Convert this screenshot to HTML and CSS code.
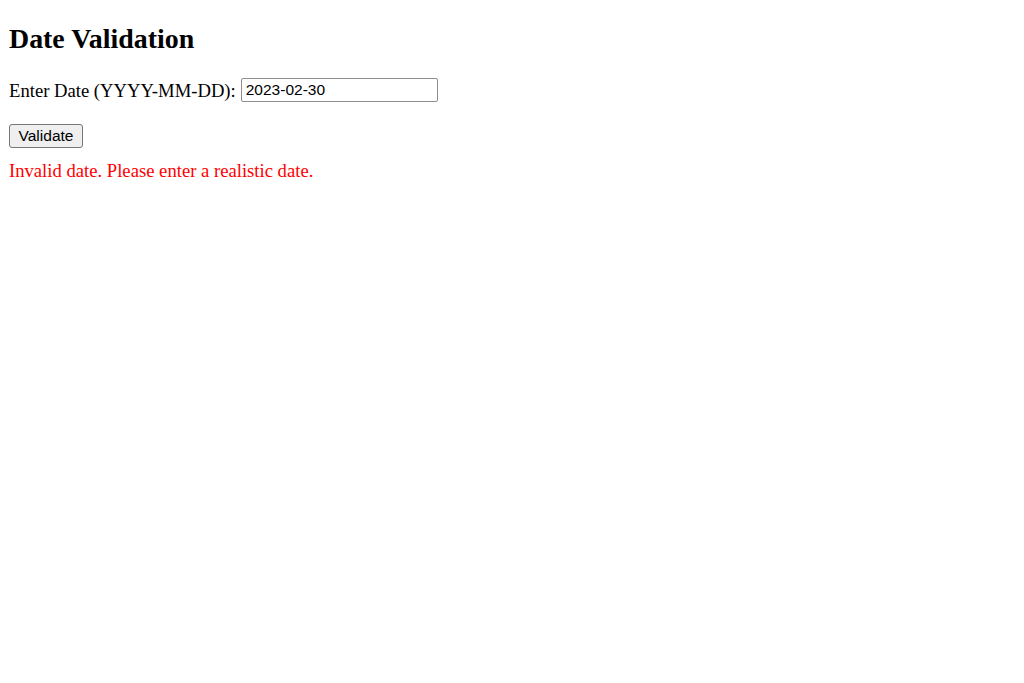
FILE: index.html
```html
<!DOCTYPE html>
<html>
<head>
<meta charset="utf-8">
<title>Date Validation</title>
<link rel="stylesheet" href="styles.css">
</head>
<body>
<h1 class="title">Date Validation</h1>
<div class="row">
  <label class="label" for="date">Enter Date (YYYY-MM-DD):</label>
  <input class="field" id="date" type="text" value="2023-02-30">
</div>
<button class="btn" type="button">Validate</button>
<div class="result">Invalid date. Please enter a realistic date.</div>
</body>
</html>
```
FILE: styles.css
```css
html, body {
  background: #ffffff;
}
body {
  margin: 0 0 0 9px;
  font-family: "Liberation Serif", "Times New Roman", serif;
  font-size: 18.65px;
  color: #000000;
}
.title {
  font-size: 27.9px;
  font-weight: bold;
  line-height: 32px;
  margin: 23px 0 23px 0;
  padding-top: 0;
}
.row {
  display: flex;
  align-items: center;
  gap: 5px;
  height: 24px;
}
.label {
  line-height: 21px;
}
.field {
  box-sizing: border-box;
  width: 197px;
  height: 24px;
  margin: 0;
  padding: 0 4px;
  font-family: "Liberation Sans", Arial, sans-serif;
  font-size: 15.5px;
  color: #000;
  border: 1px solid #8f8f8f;
  border-radius: 2px;
  background: #fff;
}
.btn {
  display: block;
  box-sizing: border-box;
  margin: 22px 0 0 0;
  width: 74px;
  height: 24px;
  padding: 0;
  font-family: "Liberation Sans", Arial, sans-serif;
  font-size: 15.5px;
  color: #000;
  background: #efefef;
  border: 1px solid #767676;
  border-radius: 3px;
}
.result {
  margin-top: 12px;
  line-height: 21px;
  color: #ff0000;
}
```
